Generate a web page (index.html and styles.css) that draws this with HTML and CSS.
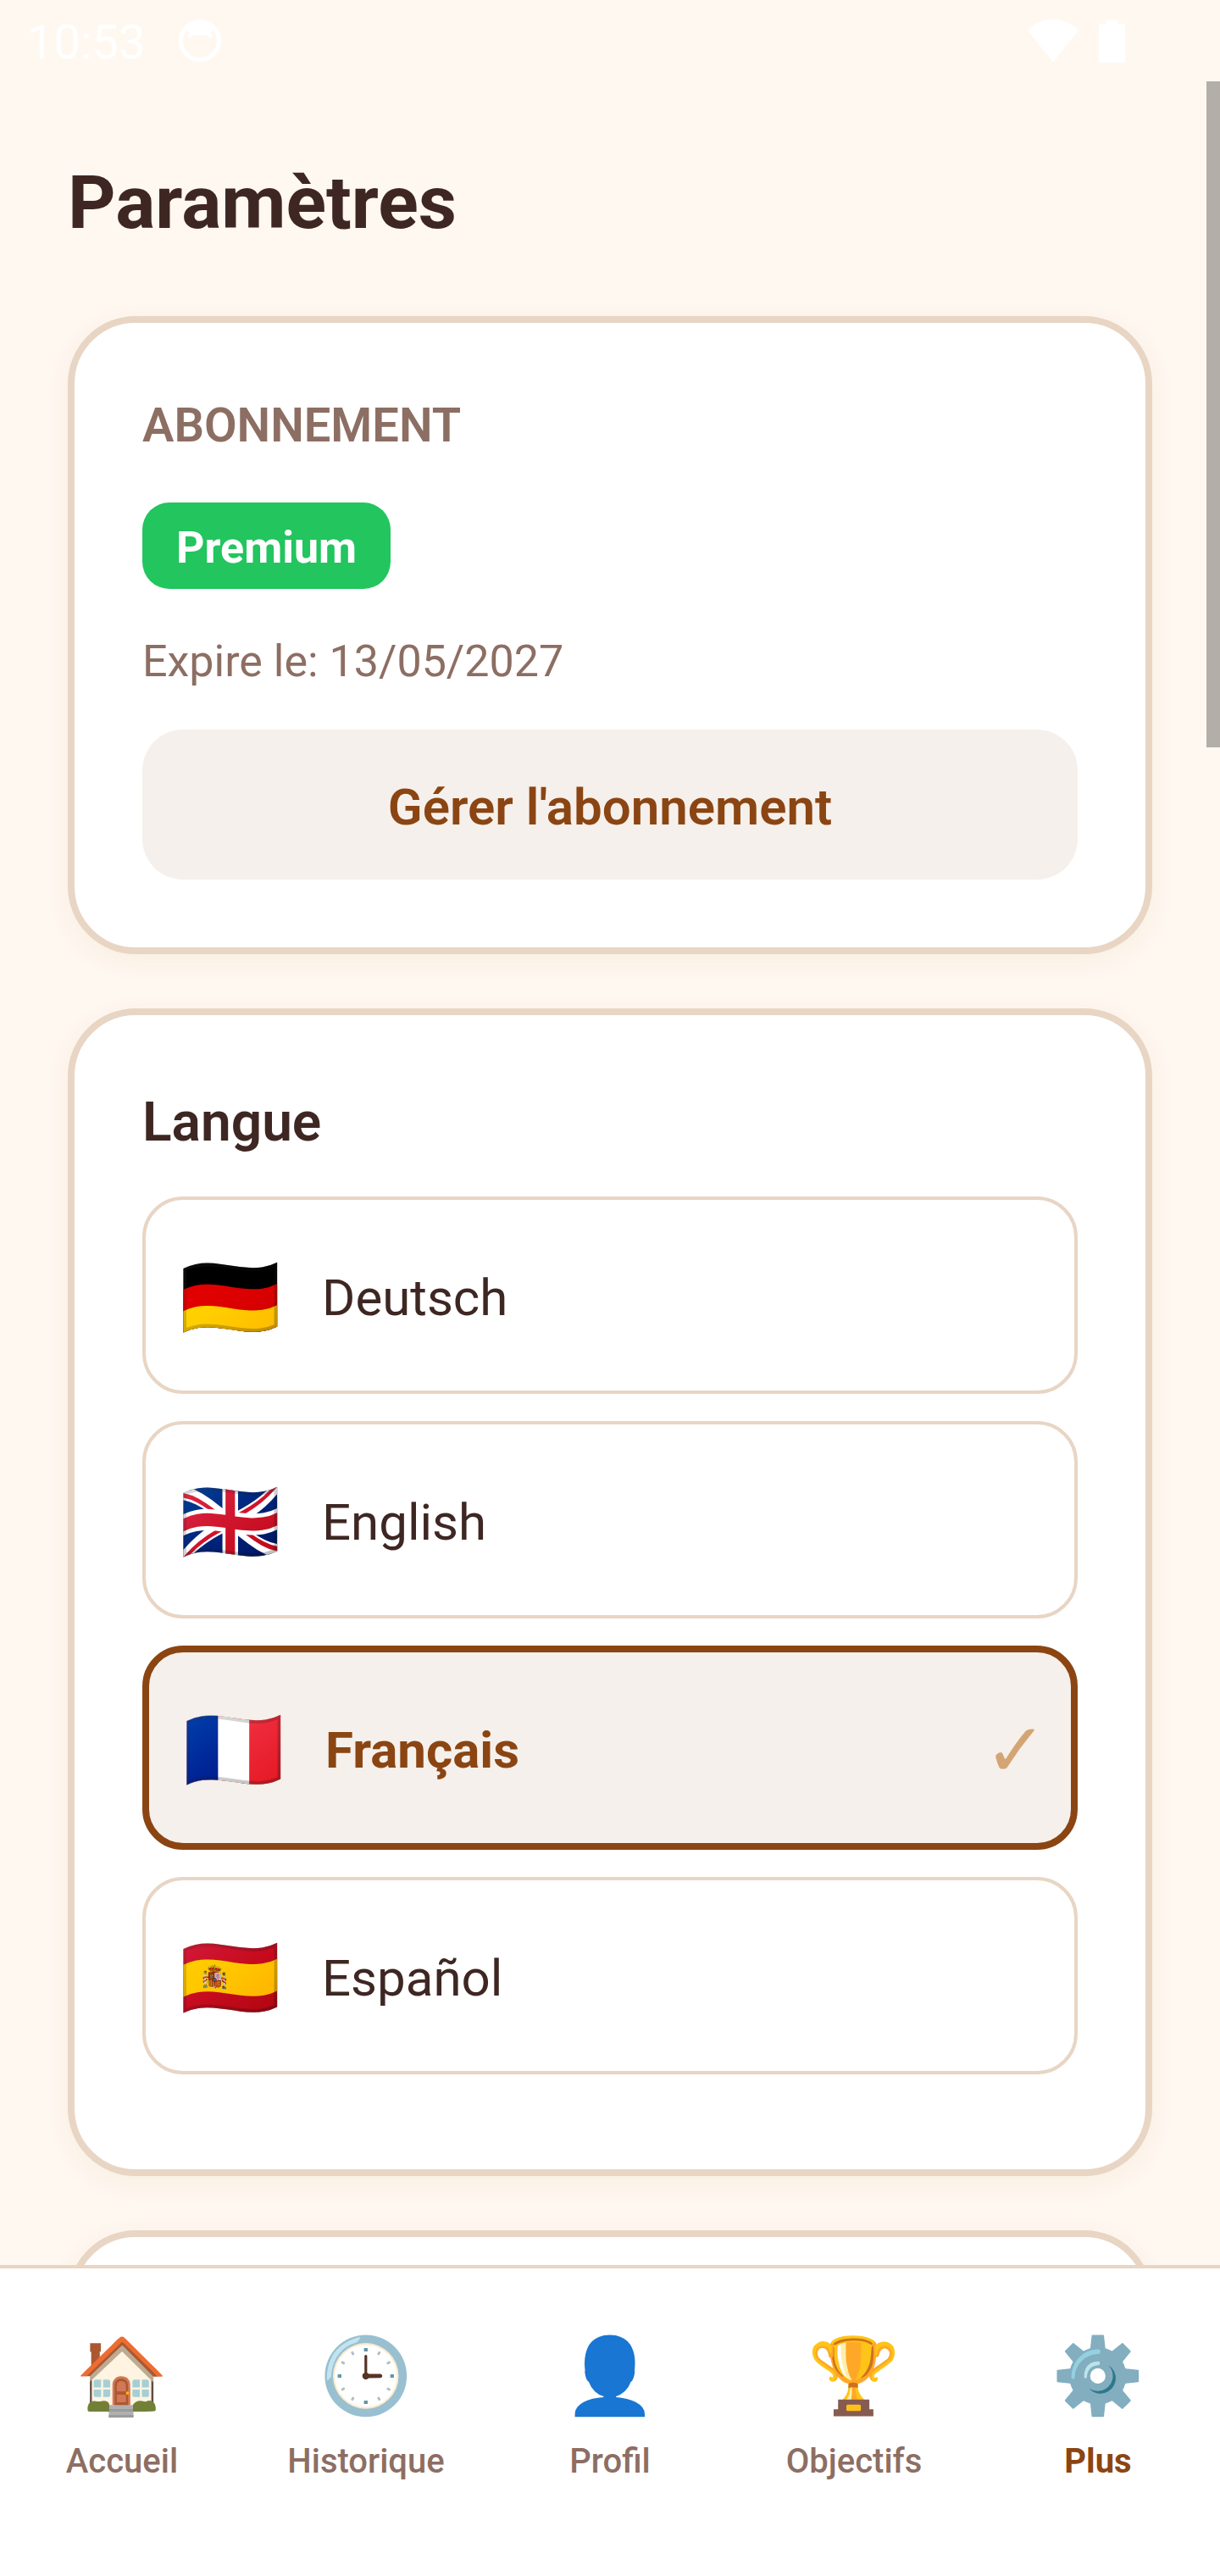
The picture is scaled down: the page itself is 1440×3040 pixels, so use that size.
FILE: index.html
```html
<!DOCTYPE html>
<html lang="fr">
<head>
  <meta charset="utf-8">
  <meta name="viewport" content="width=device-width, initial-scale=1">
  <title>Paramètres</title>
  <link rel="stylesheet" href="styles.css">
</head>
<body>
  <div class="app">
    <header class="status">
      <span class="status-time">10:53</span>
      <svg class="status-app" viewBox="0 0 50 50" aria-hidden="true">
        <circle cx="25" cy="25" r="22.5" fill="none" stroke="#fff" stroke-width="5"/>
        <path d="M9 12C13 4 19 1 25 1s12 3 16 11l-3 3 1 6-2 1-3-4c-2 0-4 1-9 1s-7-1-9-1l-3 4-2-1 1-6z" fill="#fff"/>
      </svg>
      <span class="status-system">
        <svg class="status-wifi" viewBox="0 0 60 50" aria-hidden="true">
          <path d="M0 13C8 5 18 0 30 0s22 5 30 13L30 50z" fill="#fff"/>
        </svg>
        <svg class="status-battery" viewBox="0 0 31 51" aria-hidden="true">
          <path d="M9 0h13v5h6a3 3 0 0 1 3 3v40a3 3 0 0 1-3 3H3a3 3 0 0 1-3-3V8a3 3 0 0 1 3-3h6z" fill="#fff"/>
        </svg>
      </span>
    </header>

    <div class="screen">
      <main class="content">
        <h1 class="title">Paramètres</h1>

        <section class="card">
          <h2 class="card-label">ABONNEMENT</h2>
          <span class="badge">Premium</span>
          <p class="expiry">Expire le: 13/05/2027</p>
          <button class="manage" type="button">Gérer l'abonnement</button>
        </section>

        <section class="card card-languages">
          <h2 class="card-title">Langue</h2>
          <div class="options">
            <label class="option">
              <input class="option-input" type="radio" name="lang" value="de">
              <span class="option-flag">🇩🇪</span>
              <span class="option-name">Deutsch</span>
            </label>
            <label class="option">
              <input class="option-input" type="radio" name="lang" value="en">
              <span class="option-flag">🇬🇧</span>
              <span class="option-name">English</span>
            </label>
            <label class="option option-selected">
              <input class="option-input" type="radio" name="lang" value="fr" checked>
              <span class="option-flag">🇫🇷</span>
              <span class="option-name">Français</span>
              <span class="option-check">✓</span>
            </label>
            <label class="option">
              <input class="option-input" type="radio" name="lang" value="es">
              <span class="option-flag">🇪🇸</span>
              <span class="option-name">Español</span>
            </label>
          </div>
        </section>

        <section class="card"></section>
      </main>
      <div class="scrollbar"></div>
    </div>

    <nav class="tabs">
      <a class="tab" href="#accueil"><span class="tab-icon">🏠</span>Accueil</a>
      <a class="tab" href="#historique"><span class="tab-icon">🕒</span>Historique</a>
      <a class="tab" href="#profil"><span class="tab-icon">👤</span>Profil</a>
      <a class="tab" href="#objectifs"><span class="tab-icon">🏆</span>Objectifs</a>
      <a class="tab tab-active" href="#plus"><span class="tab-icon">⚙️</span>Plus</a>
    </nav>
  </div>
</body>
</html>
```
FILE: styles.css
```css
* {
  box-sizing: border-box;
}

body {
  margin: 0;
  background: #fff8f0;
  color: #3e2723;
  font-family: Roboto, "Noto Sans", sans-serif;
}

h1, h2, p {
  margin: 0;
}

.app {
  display: flex;
  flex-direction: column;
  height: 100vh;
}

/* Status bar */
.status {
  display: flex;
  align-items: center;
  height: 96px;
  padding: 0 112px 0 32px;
  color: #fff;
}

.status-time {
  padding-top: 4px;
  font-size: 56px;
  line-height: 64px;
}

.status-app {
  width: 50px;
  height: 50px;
  margin-left: 40px;
}

.status-system {
  display: flex;
  gap: 24px;
  margin-left: auto;
}

.status-wifi {
  width: 60px;
  height: 50px;
}

.status-battery {
  width: 31px;
  height: 51px;
}

/* Scrolling area */
.screen {
  position: relative;
  flex: 1;
  min-height: 0;
}

.content {
  height: 100%;
  padding: 88px 80px;
  overflow-y: auto;
  scrollbar-width: none;
}

.scrollbar {
  position: absolute;
  top: 0;
  right: 0;
  width: 16px;
  height: 30.5%;
  background: #b3afa8;
}

.title {
  margin-bottom: 79px;
  font-size: 88px;
  font-weight: 700;
  line-height: 110px;
}

/* Cards */
.card {
  display: flex;
  flex-direction: column;
  align-items: flex-start;
  margin-bottom: 64px;
  padding: 80px;
  border: 8px solid #e8d5c4;
  border-radius: 80px;
  background: #fff;
  box-shadow: 0 8px 32px rgba(139, 69, 19, 0.06);
}

.card-languages {
  padding-bottom: 112px;
}

.card-label {
  color: #8d6e63;
  font-size: 56px;
  font-weight: 600;
  line-height: 82px;
}

.card-title {
  margin-bottom: 40px;
  font-size: 64px;
  font-weight: 600;
  line-height: 94px;
}

.badge {
  margin-top: 50px;
  padding: 23px 40px 17px;
  border-radius: 32px;
  background: #22c55e;
  color: #fff;
  font-size: 52px;
  font-weight: 700;
  line-height: 62px;
}

.expiry {
  margin: 50px 0 44px;
  color: #8d6e63;
  font-size: 52px;
  line-height: 72px;
}

.manage {
  width: 100%;
  padding: 50px 40px 44px;
  border: 0;
  border-radius: 48px;
  background: #f5f0eb;
  color: #8b4513;
  font-family: inherit;
  font-size: 60px;
  font-weight: 600;
  line-height: 83px;
}

/* Language choices */
.options {
  display: flex;
  flex-direction: column;
  gap: 32px;
  width: 100%;
}

.option {
  position: relative;
  display: flex;
  align-items: center;
  padding: 74px 40px 68px;
  border: 4px solid #e8d5c4;
  border-radius: 48px;
  font-size: 60px;
  line-height: 83px;
}

.option-selected {
  padding-right: 28px;
  border: 8px solid #8b4513;
  background: #f5f0eb;
  color: #8b4513;
  font-weight: 700;
}

.option-input {
  position: absolute;
  inset: 0;
  width: 100%;
  height: 100%;
  margin: 0;
  opacity: 0;
}

.option-flag {
  margin-right: 48px;
  font-size: 96px;
  font-weight: 400;
}

.option-check {
  margin-left: auto;
  color: #d4a574;
  font-size: 88px;
  font-weight: 400;
}

/* Bottom navigation */
.tabs {
  display: grid;
  grid-template-columns: repeat(5, 1fr);
  padding: 78px 0 111px;
  border-top: 4px solid #e8d5c4;
  background: #fff;
}

.tab {
  display: flex;
  flex-direction: column;
  align-items: center;
  gap: 28px;
  color: #8d6e63;
  font-size: 40px;
  font-weight: 500;
  line-height: 48px;
  text-decoration: none;
}

.tab-active {
  color: #8b4513;
  font-weight: 700;
}

.tab-icon {
  font-size: 88px;
  font-weight: 400;
  line-height: 98px;
}
```
